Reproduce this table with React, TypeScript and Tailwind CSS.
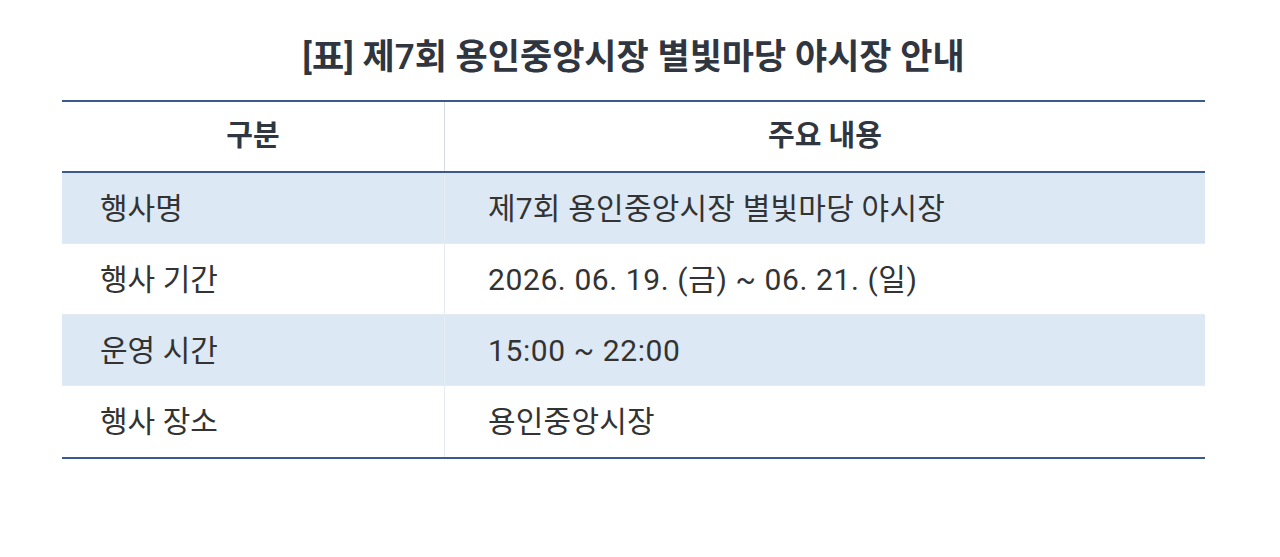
import React from "react";

const rows = [
  { k: "행사명", v: "제7회 용인중앙시장 별빛마당 야시장", blue: true, t: "tracking-[0.2px]" },
  { k: "행사 기간", v: "2026. 06. 19. (금) ~ 06. 21. (일)", blue: false, t: "tracking-[0.6px]" },
  { k: "운영 시간", v: "15:00 ~ 22:00", blue: true, t: "tracking-[0.6px]" },
  { k: "행사 장소", v: "용인중앙시장", blue: false, t: "tracking-[0.2px]" },
];

export default function App() {
  return (
    <div
      className="w-[1280px] h-[557px] bg-white text-[#333333]"
      style={{ fontFamily: '"Roboto", "Noto Sans CJK KR", sans-serif' }}
    >
      <div className="pl-[62px] pr-[75px] pt-[38px]">
        <h2 className="text-center text-[35px] leading-[40px] font-semibold text-[#30363f] h-[62px]">
          [표] 제7회 용인중앙시장 별빛마당 야시장 안내
        </h2>
        <div className="border-t-2 border-b-2 border-[#3d5a8e]">
          <div className="flex h-[71px] border-b-2 border-[#3d5a8e] text-[29px] font-semibold text-[#30363f]">
            <div className="w-[383px] flex items-center justify-center border-r border-[#d4dbe3]">구분</div>
            <div className="flex-1 flex items-center justify-center">주요 내용</div>
          </div>
          {rows.map((r, i) => (
            <div
              key={i}
              className={`flex h-[71px] text-[30px] ${r.blue ? "bg-[#dce9f5]" : "bg-white"} ${i < rows.length - 1 ? "border-b border-[#e4ebf3]" : ""}`}
            >
              <div className="w-[383px] flex items-center pl-[38px] border-r border-[#e4ebf3]">{r.k}</div>
              <div className={`flex-1 flex items-center pl-[43px] ${r.t}`}>{r.v}</div>
            </div>
          ))}
        </div>
      </div>
    </div>
  );
}
